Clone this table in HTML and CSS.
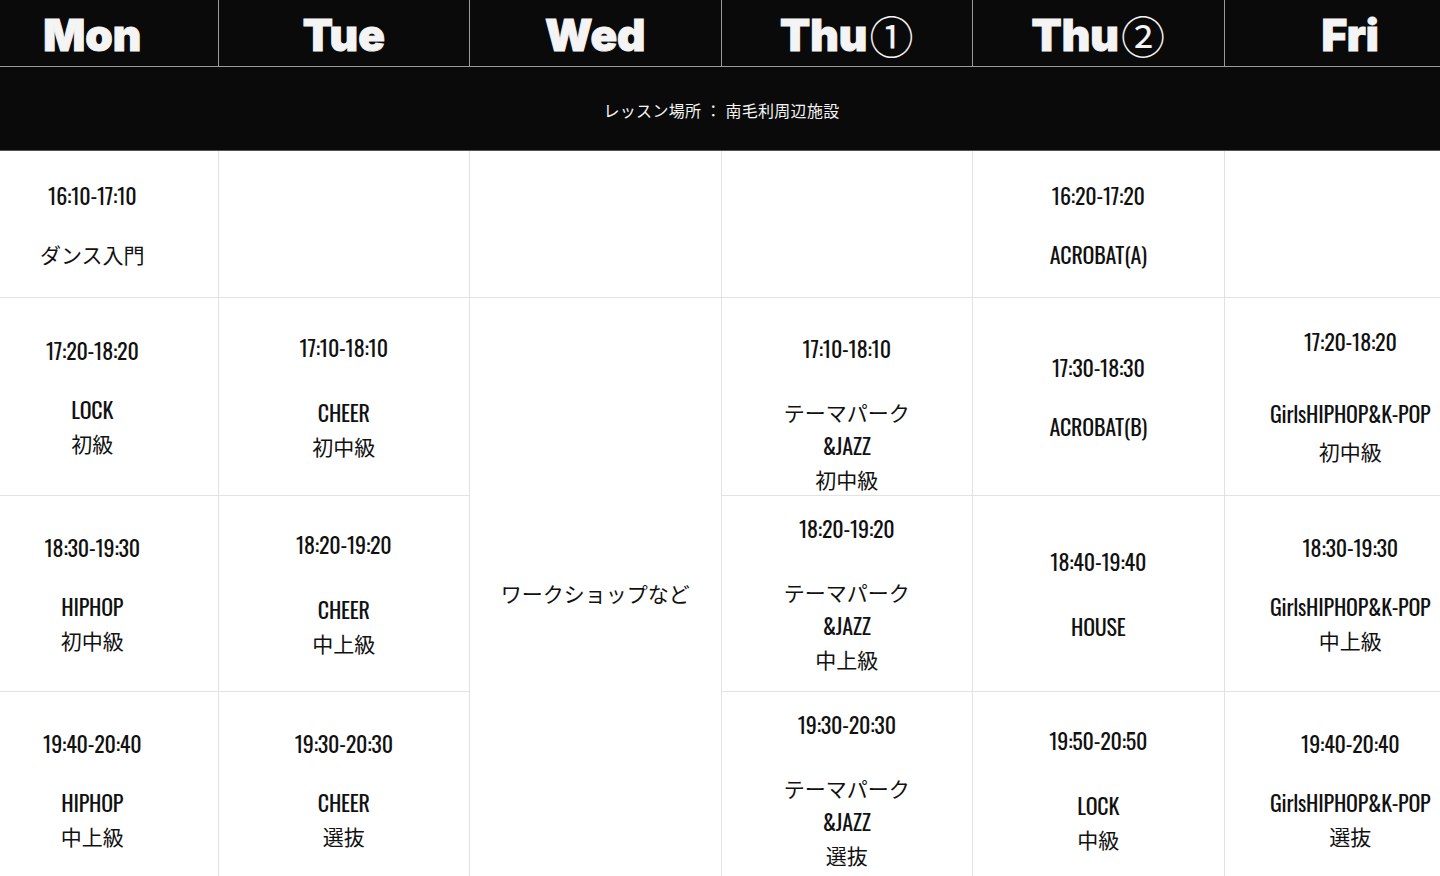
FILE: index.html
```html
<!DOCTYPE html>
<html lang="ja">
<head>
<meta charset="utf-8">
<title>Schedule</title>
<link rel="stylesheet" href="styles.css">
</head>
<body>
<div class="viewport">
  <div class="schedule">
    <div class="head">Mon</div>
    <div class="head">Tue</div>
    <div class="head">Wed</div>
    <div class="head">Thu<span class="circ">①</span></div>
    <div class="head">Thu<span class="circ">②</span></div>
    <div class="head last">Fri</div>

    <div class="place">レッスン場所 ： 南毛利周辺施設</div>

    <!-- row 1 -->
    <div class="cell"><span class="time">16:10-17:10</span><div class="cls jp">ダンス入門</div></div>
    <div class="cell"></div>
    <div class="cell"></div>
    <div class="cell"></div>
    <div class="cell"><span class="time">16:20-17:20</span><div class="cls"><span class="en">ACROBAT(A)</span></div></div>
    <div class="cell last"></div>

    <!-- row 2 -->
    <div class="cell"><span class="time">17:20-18:20</span><div class="cls"><span class="en">LOCK</span><span class="jp">初級</span></div></div>
    <div class="cell"><span class="time">17:10-18:10</span><div class="cls g65"><span class="en">CHEER</span><span class="jp">初中級</span></div></div>
    <div class="cell wed"><div class="cls jp">ワークショップなど</div></div>
    <div class="cell thu1 first"><span class="time">17:10-18:10</span><div class="cls g65 tight"><span class="jp">テーマパーク</span><span class="en">&amp;JAZZ</span><span class="jp">初中級</span></div></div>
    <div class="cell"><span class="time">17:30-18:30</span><div class="cls"><span class="en">ACROBAT(B)</span></div></div>
    <div class="cell last"><span class="time">17:20-18:20</span><div class="cls g72 loose"><span class="en">GirlsHIPHOP&amp;K-POP</span><span class="jp">初中級</span></div></div>

    <!-- row 3 -->
    <div class="cell"><span class="time">18:30-19:30</span><div class="cls"><span class="en">HIPHOP</span><span class="jp">初中級</span></div></div>
    <div class="cell"><span class="time">18:20-19:20</span><div class="cls g65"><span class="en">CHEER</span><span class="jp">中上級</span></div></div>
    <div class="cell thu1"><span class="time">18:20-19:20</span><div class="cls g65 tight"><span class="jp">テーマパーク</span><span class="en">&amp;JAZZ</span><span class="jp">中上級</span></div></div>
    <div class="cell"><span class="time">18:40-19:40</span><div class="cls g65"><span class="en">HOUSE</span></div></div>
    <div class="cell last"><span class="time">18:30-19:30</span><div class="cls"><span class="en">GirlsHIPHOP&amp;K-POP</span><span class="jp">中上級</span></div></div>

    <!-- row 4 -->
    <div class="cell"><span class="time">19:40-20:40</span><div class="cls"><span class="en">HIPHOP</span><span class="jp">中上級</span></div></div>
    <div class="cell"><span class="time">19:30-20:30</span><div class="cls"><span class="en">CHEER</span><span class="jp">選抜</span></div></div>
    <div class="cell thu1"><span class="time">19:30-20:30</span><div class="cls g65 tight"><span class="jp">テーマパーク</span><span class="en">&amp;JAZZ</span><span class="jp">選抜</span></div></div>
    <div class="cell"><span class="time">19:50-20:50</span><div class="cls g65"><span class="en">LOCK</span><span class="jp">中級</span></div></div>
    <div class="cell last"><span class="time">19:40-20:40</span><div class="cls"><span class="en">GirlsHIPHOP&amp;K-POP</span><span class="jp">選抜</span></div></div>
  </div>
</div>
</body>
</html>
```

FILE: styles.css
```css
* { box-sizing: border-box; }

html, body {
  margin: 0;
  padding: 0;
  background: #ffffff;
}

.viewport {
  width: 1440px;
  height: 876px;
  overflow: hidden;
}

.schedule {
  display: grid;
  width: 1509px;
  margin-left: -33px;
  grid-template-columns: repeat(6, 251.5px);
  grid-template-rows: 67px 84px 147px 198px 196px 196px;
  color: #111111;
  font-family: "Noto Sans CJK JP", "Noto Sans", sans-serif;
}

.head {
  background: #0a0a0a;
  color: #f4f4f4;
  border-right: 1px solid #9a9a9a;
  border-bottom: 1px solid #9a9a9a;
  display: flex;
  align-items: center;
  justify-content: center;
  font-family: "Inter", "Lato", "Liberation Sans", sans-serif;
  font-weight: 900;
  font-size: 44px;
  line-height: 1;
  padding-top: 3px;
  -webkit-text-stroke: 1px #f4f4f4;
}

.head .circ {
  font-family: "Noto Sans CJK JP", sans-serif;
  font-weight: 400;
  font-size: 44px;
  margin-left: 2px;
  -webkit-text-stroke: 0;
}

.last { border-right: none; }

.place {
  grid-column: 1 / -1;
  background: #0a0a0a;
  color: #f4f4f4;
  border-bottom: 1px solid #555555;
  display: flex;
  align-items: center;
  justify-content: center;
  font-size: 16px;
  letter-spacing: 0.3px;
  padding-top: 2px;
}

.cell {
  background: #ffffff;
  border-right: 1px solid #e2e2e2;
  border-bottom: 1px solid #e2e2e2;
  display: flex;
  flex-direction: column;
  align-items: center;
  justify-content: center;
  text-align: center;
}

.cell.last { border-right: none; }

.cell.wed {
  grid-column: 3;
  grid-row: 4 / span 3;
}

.cell.thu1.first {
  padding-top: 34px;
}

.time,
.en {
  display: block;
  font-family: "Oswald", "Liberation Sans Narrow", "Roboto Condensed", "DejaVu Sans Condensed", "Liberation Sans", sans-serif;
  font-stretch: condensed;
  font-size: 22px;
  line-height: 34px;
  letter-spacing: -0.2px;
}

.cls {
  margin-top: 25px;
  font-size: 21px;
  line-height: 34px;
  display: flex;
  flex-direction: column;
  align-items: center;
}

.cls .jp,
.cls.jp {
  display: block;
  font-family: "Noto Sans CJK JP", sans-serif;
  font-size: 21px;
  line-height: 34px;
}

.cls.g65 { margin-top: 31px; }
.cls.g72 { margin-top: 36px; }
.cls.tight .jp,
.cls.tight .en { line-height: 33.5px; }
.cls.loose .jp,
.cls.loose .en { line-height: 38px; }

.wed .cls { margin-top: 0; }
```
